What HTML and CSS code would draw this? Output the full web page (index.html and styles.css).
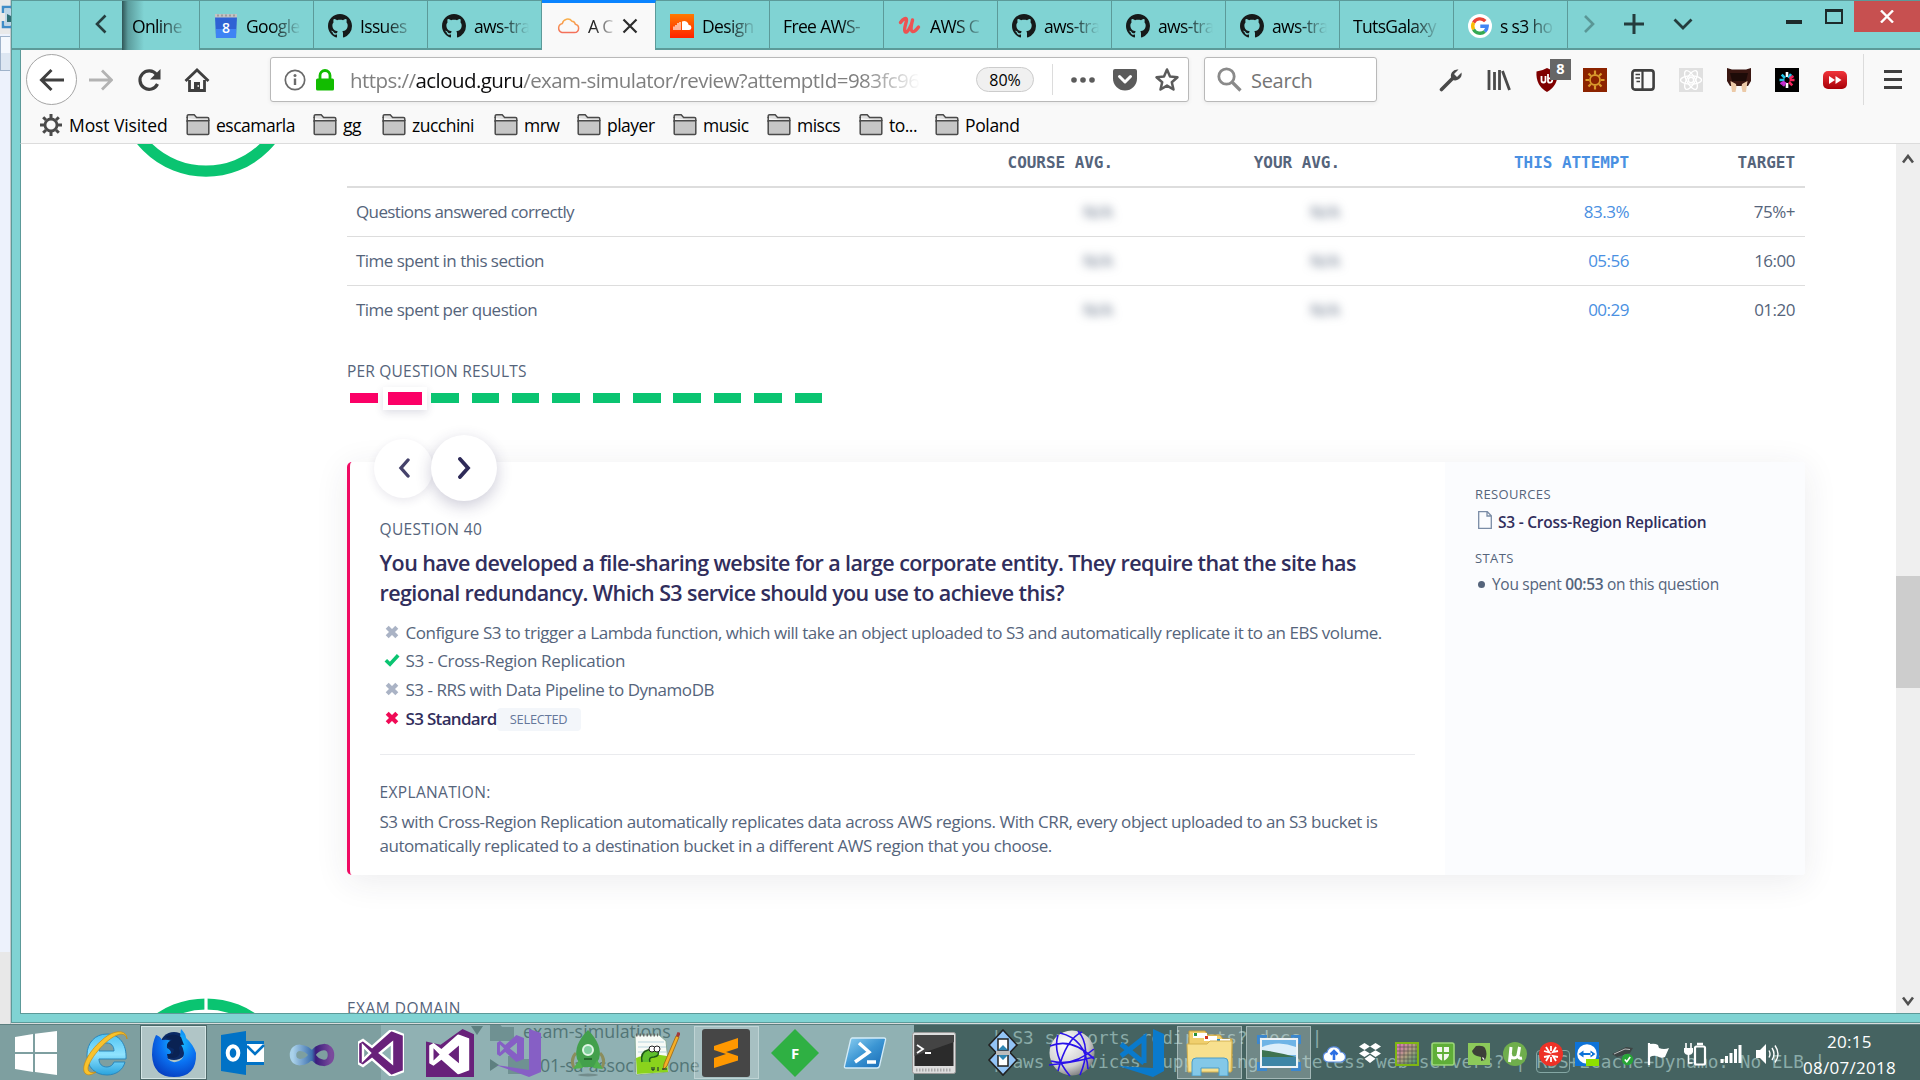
FILE: index.html
```html
<!DOCTYPE html>
<html lang="en">
<head>
<meta charset="utf-8">
<title>A Cloud Guru</title>
<link rel="stylesheet" href="styles.css">
</head>
<body>
<svg class="defs" width="0" height="0">
  <defs>
    <symbol id="github" viewBox="0 0 16 16"><path fill="#161a1a" fill-rule="evenodd" d="M8 0C3.58 0 0 3.58 0 8c0 3.54 2.29 6.53 5.47 7.59.4.07.55-.17.55-.38 0-.19-.01-.82-.01-1.49-2.01.37-2.53-.49-2.69-.94-.09-.23-.48-.94-.82-1.13-.28-.15-.68-.52-.01-.53.63-.01 1.08.58 1.23.82.72 1.21 1.87.87 2.33.66.07-.52.28-.87.51-1.07-1.78-.2-3.64-.89-3.64-3.95 0-.87.31-1.59.82-2.15-.08-.2-.36-1.02.08-2.12 0 0 .67-.21 2.2.82.64-.18 1.32-.27 2-.27s1.36.09 2 .27c1.53-1.04 2.2-.82 2.2-.82.44 1.1.16 1.92.08 2.12.51.56.82 1.27.82 2.15 0 3.07-1.87 3.75-3.65 3.95.29.25.54.73.54 1.48 0 1.07-.01 1.93-.01 2.2 0 .21.15.46.55.38A8.01 8.01 0 0 0 16 8c0-4.42-3.58-8-8-8z"/></symbol>
    <symbol id="folder" viewBox="0 0 24 24"><path d="M1.2 5V3.2q0-1.4 1.4-1.4h5.6l2.4 2.6h10.8q1.4 0 1.4 1.4V8" fill="#dedede" stroke="#4a4a4a" stroke-width="1.5"/><path d="M1.2 7.8h21.6v12.6q0 1-1 1H2.2q-1 0-1-1z" fill="#c6c6c6" stroke="#4a4a4a" stroke-width="1.5"/><path d="M1.2 4v5" stroke="#4a4a4a" stroke-width="1.5"/></symbol>
    <symbol id="cross" viewBox="0 0 14 14"><path d="M2.2 2.2l9.600 9.600M11.800 2.2l-9.600 9.600" stroke="currentColor" stroke-width="4.200"/></symbol>
    <symbol id="vs" viewBox="0 0 46 46"><path fill-rule="evenodd" d="M33 0l13 5v36l-13 5L14 29 5 36 0 33V13l5-3 9 7zM34 13L22 23l12 10zM5 16v14l7-7z"/></symbol>
  </defs>
</svg>

<div class="desktop">
  <div class="behind">
    <svg width="11" height="36" viewBox="0 0 11 36"><path d="M11 7H3v6M3 21v6h8" fill="none" stroke="#3f8cc7" stroke-width="2.5"/><path d="M5 9h6v16H5z" fill="#bcd6e8"/><path d="M7 14l4 2v6H7z" fill="#2c6d74"/></svg>
    <i class="behind-button"></i>
  </div>

  <div class="window">
    <header class="tabs">
      <div class="tab-lead"></div>
      <div class="tab-scroll"><svg width="14" height="20" viewBox="0 0 14 20"><path d="M11.500 1.500L3 10l8.500 8.500" fill="none" stroke="#263f40" stroke-width="2.600"/></svg></div>
      <div class="tab first"><span class="label">Online</span></div>
      <div class="tab"><svg class="fav" viewBox="0 0 24 24"><path d="M1 3h22l-1 21H2z" fill="#2f62d4"/><path d="M2 15h20v9H2z" fill="#3f83f4"/><path d="M1 0h22v3.500H1z" fill="#c4c4c4"/><path d="M4 .5v2M8 .5v2M12 .5v2M16 .5v2M20 .5v2" stroke="#777"/><text x="12" y="18.500" class="cal">8</text></svg><span class="label">Google</span></div>
      <div class="tab"><svg class="fav"><use href="#github"/></svg><span class="label">Issues</span></div>
      <div class="tab"><svg class="fav"><use href="#github"/></svg><span class="label">aws-tra</span></div>
      <div class="tab active"><svg class="fav" viewBox="0 0 24 24"><defs><linearGradient id="cg" x1="0" y1="0" x2="0" y2="1"><stop offset="0" stop-color="#f9b04c"/><stop offset="1" stop-color="#f4705a"/></linearGradient></defs><path d="M6 18.500h12.500a4.200 4.200 0 0 0 .8-8.300 3.600 3.600 0 0 0-3.300-3 5.400 5.400 0 0 0-9.600 2.200A4.700 4.700 0 0 0 6 18.500z" fill="none" stroke="url(#cg)" stroke-width="1.500"/></svg><span class="label short">A C</span><svg class="tab-close" width="16" height="16" viewBox="0 0 16 16"><path d="M1.500 1.500l13 13M14.500 1.500l-13 13" stroke="#2c2c2c" stroke-width="2.200"/></svg></div>
      <div class="tab"><svg class="fav" viewBox="0 0 24 24"><defs><linearGradient id="sc" x1="0" y1="0" x2="0" y2="1"><stop offset="0" stop-color="#ff7a00"/><stop offset="1" stop-color="#ff2200"/></linearGradient></defs><path d="M0 0h24v24H0z" fill="url(#sc)"/><path d="M12 7.500a4.500 4.500 0 0 1 6.700 3.500 2.500 2.500 0 1 1 .3 5h-7z" fill="#fff"/><path d="M4 12.500V16M6 11v5M8 9v7M10 8v8" stroke="#fff" stroke-width="1.200"/></svg><span class="label">Design</span></div>
      <div class="tab bare"><span class="label">Free AWS-</span></div>
      <div class="tab"><svg class="fav" viewBox="0 0 24 24"><path d="M2.500 8.500c2.500-3.500 6-5.500 6-2.500 0 2.500-3 9-1.500 11.500 2 3 6.500-6 7.500-11M14.500 6c-1 4-2.500 10.500 0 11.500 2 .8 4-2 6-4.500" fill="none" stroke="#ec5252" stroke-width="3.400" stroke-linecap="round"/></svg><span class="label">AWS C</span></div>
      <div class="tab"><svg class="fav"><use href="#github"/></svg><span class="label">aws-tra</span></div>
      <div class="tab"><svg class="fav"><use href="#github"/></svg><span class="label">aws-tra</span></div>
      <div class="tab"><svg class="fav"><use href="#github"/></svg><span class="label">aws-tra</span></div>
      <div class="tab bare"><span class="label">TutsGalaxy</span></div>
      <div class="tab"><svg class="fav" viewBox="0 0 24 24"><circle cx="12" cy="12" r="12" fill="#fff"/><g fill="none" stroke-width="3.400"><path d="M17.300 7.200A7.300 7.300 0 0 0 5.600 8.600" stroke="#ea4335"/><path d="M5.600 8.600a7.300 7.300 0 0 0 0 6.900" stroke="#fbbc05"/><path d="M5.600 15.500a7.300 7.300 0 0 0 11.200 2" stroke="#34a853"/><path d="M16.800 17.500A7.300 7.300 0 0 0 19.200 12.300H12.300" stroke="#4285f4"/></g></svg><span class="label">s s3 ho</span></div>
      <div class="tab-tools">
        <svg width="12" height="18" viewBox="0 0 12 18"><path d="M2 1l8 8-8 8" fill="none" stroke="#5a9796" stroke-width="2.600"/></svg>
        <svg width="22" height="22" viewBox="0 0 22 22"><path d="M11 1v20M1 11h20" stroke="#243c3d" stroke-width="3"/></svg>
        <svg width="20" height="12" viewBox="0 0 20 12"><path d="M1.500 1.500L10 10l8.500-8.500" fill="none" stroke="#243c3d" stroke-width="2.800"/></svg>
      </div>
      <div class="window-controls">
        <i class="min"></i><i class="max"></i>
        <div class="close"><svg width="14" height="13" viewBox="0 0 14 13"><path d="M1 .5l12 12M13 .5l-12 12" stroke="#fff" stroke-width="2.400"/></svg></div>
      </div>
    </header>

    <div class="toolbar">
      <div class="back"><svg width="26" height="24" viewBox="0 0 26 24"><path d="M25 12H3M12.500 2L2.500 12l10 10" fill="none" stroke="#3f3f3f" stroke-width="3"/></svg></div>
      <svg class="forward" width="24" height="22" viewBox="0 0 24 22"><path d="M0 11h22M13 1.500L22.500 11 13 20.500" fill="none" stroke="#b3b3b3" stroke-width="2.800"/></svg>
      <svg class="reload" width="24" height="24" viewBox="0 0 24 24"><path d="M19.500 6.500A9.200 9.200 0 1 0 20.500 16" fill="none" stroke="#3f3f3f" stroke-width="3.200"/><path d="M23.500 1v10.500H13z" fill="#3f3f3f"/></svg>
      <svg class="home" width="26" height="24" viewBox="0 0 26 24"><path d="M1.500 13L13 2l11.500 11" fill="none" stroke="#3f3f3f" stroke-width="2.800"/><path d="M5.500 12v10.500h15V12M13 4" fill="none" stroke="#3f3f3f" stroke-width="2.800"/><path d="M10 14h6v8h-6z" fill="#3f3f3f"/><path d="M13.500 18h1.500" stroke="#fff" stroke-width="1.500"/></svg>
      <div class="urlbar">
        <svg width="22" height="22" viewBox="0 0 22 22"><circle cx="11" cy="11" r="9.700" fill="none" stroke="#6a6a6a" stroke-width="1.700"/><path d="M11 9.500V16" stroke="#6a6a6a" stroke-width="2.400"/><circle cx="11" cy="6.400" r="1.500" fill="#6a6a6a"/></svg>
        <svg class="lock" width="18" height="22" viewBox="0 0 18 22"><rect y="9.500" width="18" height="12" rx="1.500" fill="#12bc00"/><path d="M4 11V6.500a5 5 0 0 1 10 0V11" fill="none" stroke="#12bc00" stroke-width="2.800"/></svg>
        <div class="url">https://<b>acloud.guru</b>/exam-simulator/review?attemptId=983fc96</div>
        <div class="zoom">80%</div>
        <i class="rule"></i>
        <svg class="dots" width="24" height="6" viewBox="0 0 24 6"><g fill="#5b5b5b"><circle cx="3" cy="3" r="2.800"/><circle cx="12" cy="3" r="2.800"/><circle cx="21" cy="3" r="2.800"/></g></svg>
        <svg class="pocket" width="24" height="22" viewBox="0 0 24 22"><path d="M2 0h20q2 0 2 2v7.500a12 12 0 0 1-24 0V2q0-2 2-2z" fill="#5b5b5b"/><path d="M6.500 7.500L12 13l5.500-5.500" fill="none" stroke="#fff" stroke-width="3" stroke-linecap="round" stroke-linejoin="round"/></svg>
        <svg width="26" height="25" viewBox="0 0 26 25"><path d="M13 2.500l3 7 7.500.7-5.700 5 1.700 7.300L13 18.600 6.500 22.500l1.700-7.300-5.700-5L10 9.500z" fill="none" stroke="#5b5b5b" stroke-width="2.500" stroke-linejoin="round"/></svg>
      </div>
      <div class="search"><svg width="25" height="25" viewBox="0 0 25 25"><circle cx="9.500" cy="9.500" r="7.700" fill="none" stroke="#8a8a8a" stroke-width="2.800"/><path d="M15 15l8.500 8.500" stroke="#8a8a8a" stroke-width="3.200"/></svg><span>Search</span></div>
      <div class="extensions">
        <div><svg width="24" height="24" viewBox="0 0 24 24"><path d="M2.500 21.500L14 10" stroke="#4a4a4a" stroke-width="3.600" stroke-linecap="round"/><path d="M19.500 1.500L15 6l3 3 4.500-4.500a6.500 6.500 0 0 1-9.500 7A6.500 6.500 0 0 1 19.500 1.500z" fill="#4a4a4a"/></svg></div>
        <div><svg width="24" height="22" viewBox="0 0 24 22"><path d="M2 1v20M7.500 3v18M12.500 1v20M15.500 2l7 19" stroke="#4a4a4a" stroke-width="2.800"/></svg></div>
        <div class="ublock"><svg width="24" height="24" viewBox="0 0 24 24"><path d="M12 0q5 3 10.500 3.500 1 14-10.500 20.500Q.5 17.500 1.500 3.500 7 3 12 0z" fill="#7f0000"/><path d="M6.500 8v4.500q0 2 2 2t2-2V8M13 6v7q0 1.700 2 1.700t2.200-2.200-2.200-2.200H13" fill="none" stroke="#fff" stroke-width="1.800"/></svg><span class="badge">8</span></div>
        <div><svg width="24" height="24" viewBox="0 0 24 24"><path d="M0 0h24v24H0z" fill="#8c2300"/><circle cx="12" cy="12" r="5" fill="none" stroke="#d99a2c" stroke-width="1.800"/><path d="M12 2.500V6M12 18v3.500M2.500 12H6M18 12h3.500M5.500 5.500L8 8M16 16l2.500 2.500M18.500 5.500L16 8M8 16l-2.500 2.500" stroke="#d99a2c" stroke-width="2.200"/></svg></div>
        <div><svg width="24" height="22" viewBox="0 0 24 22"><rect x="1.400" y="1.400" width="21.200" height="19.200" rx="2.600" fill="none" stroke="#3f3f3f" stroke-width="2.600"/><path d="M11.500 1v20" stroke="#3f3f3f" stroke-width="2.200"/><path d="M4.500 5.500h4.500M4.500 9h4.500M5.500 12.500h3.500" stroke="#3f3f3f" stroke-width="1.500"/></svg></div>
        <div><svg width="24" height="24" viewBox="0 0 24 24"><path d="M0 0h24v24H0z" fill="#e0e0e0"/><g fill="none" stroke="#fff" stroke-width="1.300"><circle cx="12" cy="12" r="2.600"/><ellipse cx="12" cy="12" rx="10.500" ry="4.200"/><ellipse cx="12" cy="12" rx="10.500" ry="4.200" transform="rotate(60 12 12)"/><ellipse cx="12" cy="12" rx="10.500" ry="4.200" transform="rotate(120 12 12)"/></g></svg></div>
        <div><svg width="24" height="24" viewBox="0 0 24 24"><path d="M0 0l5 1.500h14L24 0v13l-3 5H3l-3-5z" fill="#3a1712"/><path d="M3 5h18l-2 8H5z" fill="#1d0b08"/><path d="M3.500 13l5.500 3 .5 3-1 5H5zM20.500 13L15 16l-.5 3 1 5H19z" fill="#eccaa8"/></svg></div>
        <div><svg width="24" height="24" viewBox="0 0 24 24"><path d="M0 0h24v24H0z"/><g stroke-width="2.600"><path d="M12 4v5M12 15v5" stroke="#fff"/><path d="M4.500 12h5M6.700 6.700L10 10M16 6l-2.500 4" stroke="#22c5e8"/><path d="M14.500 12h5M17.300 17.300L14 14M18.500 8l-4 2.500" stroke="#f1265c"/><path d="M8 18l2.500-4M5.500 16l4-2.500" stroke="#c52fd0"/></g></svg></div>
        <div><svg width="24" height="18" viewBox="0 0 24 18"><defs><linearGradient id="rd" x1="0" y1="0" x2="0" y2="1"><stop offset="0" stop-color="#f1343a"/><stop offset="1" stop-color="#a80008"/></linearGradient></defs><rect width="24" height="18" rx="5" fill="url(#rd)"/><path d="M6 5l6 4-6 4zM12.500 5l6 4-6 4z" fill="#fff"/></svg></div>
      </div>
      <i class="rule tall"></i>
      <svg class="menu" width="18" height="19" viewBox="0 0 18 19"><path d="M0 1.500h18M0 9.500h18M0 17.500h18" stroke="#3f3f3f" stroke-width="2.800"/></svg>
    </div>

    <nav class="bookmarks">
      <a class="bm-gear"><svg width="22" height="22" viewBox="0 0 22 22"><circle cx="11" cy="11" r="6" fill="none" stroke="#4a4a4a" stroke-width="2.800"/><path d="M11 0v4M11 18v4M0 11h4M18 11h4M3.200 3.200L6 6M16 16l2.800 2.800M18.800 3.200L16 6M6 16l-2.800 2.800" stroke="#4a4a4a" stroke-width="3"/></svg><span>Most Visited</span></a>
      <a><svg class="fold"><use href="#folder"/></svg><span>escamarla</span></a>
      <a><svg class="fold"><use href="#folder"/></svg><span>gg</span></a>
      <a><svg class="fold"><use href="#folder"/></svg><span>zucchini</span></a>
      <a><svg class="fold"><use href="#folder"/></svg><span>mrw</span></a>
      <a><svg class="fold"><use href="#folder"/></svg><span>player</span></a>
      <a><svg class="fold"><use href="#folder"/></svg><span>music</span></a>
      <a><svg class="fold"><use href="#folder"/></svg><span>miscs</span></a>
      <a><svg class="fold"><use href="#folder"/></svg><span>to...</span></a>
      <a><svg class="fold"><use href="#folder"/></svg><span>Poland</span></a>
    </nav>

    <div class="viewport">
      <div class="page">
        <section class="domain">
          <svg class="ring" width="178" height="33" viewBox="0 145 178 33"><circle cx="89" cy="89" r="83.200" fill="none" stroke="#0ac471" stroke-width="11.200"/></svg>
          <div class="results">
            <table>
              <thead><tr><th class="name"></th><th class="c1">COURSE AVG.</th><th class="c2">YOUR AVG.</th><th class="c3 blue">THIS ATTEMPT</th><th>TARGET</th></tr></thead>
              <tbody>
                <tr><td class="name">Questions answered correctly</td><td class="c1"><span class="blurred">N/A</span></td><td class="c2"><span class="blurred">N/A</span></td><td class="c3 blue">83.3%</td><td>75%+</td></tr>
                <tr><td class="name loose">Time spent in this section</td><td class="c1"><span class="blurred">N/A</span></td><td class="c2"><span class="blurred">N/A</span></td><td class="c3 blue">05:56</td><td>16:00</td></tr>
                <tr><td class="name loose">Time spent per question</td><td class="c1"><span class="blurred">N/A</span></td><td class="c2"><span class="blurred">N/A</span></td><td class="c3 blue">00:29</td><td>01:20</td></tr>
              </tbody>
            </table>
            <h3 class="per">PER QUESTION RESULTS</h3>
            <div class="bars"><i class="wrong"></i><i class="wrong current"></i><i></i><i></i><i></i><i></i><i></i><i></i><i></i><i></i><i></i><i></i></div>

            <article class="card">
              <div class="pager">
                <button class="prev"><svg width="12" height="20" viewBox="0 0 12 20"><path d="M10 2L3 10l7 8" fill="none" stroke="#45426b" stroke-width="3.400" stroke-linecap="round"/></svg></button>
                <button class="next"><svg width="13" height="22" viewBox="0 0 13 22"><path d="M2 2l8 9-8 9" fill="none" stroke="#2e2a58" stroke-width="3.800" stroke-linecap="round"/></svg></button>
              </div>
              <div class="question">
                <h4>QUESTION 40</h4>
                <h2>You have developed a file-sharing website for a large corporate entity. They require that the site has<br>regional redundancy. Which S3 service should you use to achieve this?</h2>
                <ul class="options">
                  <li><svg class="mark"><use href="#cross"/></svg><span>Configure S3 to trigger a Lambda function, which will take an object uploaded to S3 and automatically replicate it to an EBS volume.</span></li>
                  <li class="right"><svg class="mark tick" viewBox="0 0 16 14"><path d="M1.800 7.200L6 11.200l8.200-9" fill="none" stroke="currentColor" stroke-width="3.600"/></svg><span>S3 - Cross-Region Replication</span></li>
                  <li><svg class="mark"><use href="#cross"/></svg><span>S3 - RRS with Data Pipeline to DynamoDB</span></li>
                  <li class="chosen"><svg class="mark"><use href="#cross"/></svg><span>S3 Standard</span><em>SELECTED</em></li>
                </ul>
                <hr>
                <h4>EXPLANATION:</h4>
                <p>S3 with Cross-Region Replication automatically replicates data across AWS regions. With CRR, every object uploaded to an S3 bucket is<br>automatically replicated to a destination bucket in a different AWS region that you choose.</p>
              </div>
              <aside>
                <h5>RESOURCES</h5>
                <a class="resource"><svg width="14" height="18" viewBox="0 0 14 18"><path d="M.7.700h8.600l4 4v12.600H.7zM9 .7v4.300h4.300" fill="none" stroke="#7a8ca6" stroke-width="1.300"/></svg><span>S3 - Cross-Region Replication</span></a>
                <h5>STATS</h5>
                <div class="stat"><i></i><span>You spent <b>00:53</b> on this question</span></div>
              </aside>
            </article>
          </div>
        </section>
        <section class="domain next-domain">
          <svg class="ring" width="178" height="16" viewBox="0 0 178 16"><circle cx="89" cy="89" r="83" fill="none" stroke="#0ac471" stroke-width="11.200"/><path d="M89 0v13" stroke="#fff" stroke-width="3.200"/></svg>
          <h3>EXAM DOMAIN</h3>
        </section>
      </div>
      <div class="scrollbar">
        <svg width="12" height="10" viewBox="0 0 12 10"><path d="M1 8.500L6 2l5 6.500" fill="none" stroke="#505050" stroke-width="2.600"/></svg>
        <i class="thumb"></i>
        <svg width="12" height="10" viewBox="0 0 12 10"><path d="M1 1.500L6 8l5-6.500" fill="none" stroke="#505050" stroke-width="2.600"/></svg>
      </div>
    </div>
  </div>
</div>

<footer class="taskbar">
  <div class="ghost ghost-tree">
    <div><svg width="12" height="9" viewBox="0 0 12 9"><path d="M0 0h12L6 9z" fill="#5e8080"/></svg><svg width="26" height="20" viewBox="0 0 26 20"><path d="M0 2h9l3 4h12v14H0z" fill="#6f9192"/></svg><span>exam-simulations</span></div>
    <div class="nested"><svg width="9" height="12" viewBox="0 0 9 12"><path d="M0 0l9 6-9 6z" fill="#5e8080"/></svg><svg width="23" height="18" viewBox="0 0 23 18"><path d="M0 0h9l3 3h11v15H0z" fill="#6f9192"/></svg><span>01-sa-associate-one</span></div>
  </div>
  <pre class="ghost ghost-editor">| S3 supports redirects? docs |
| aws services supporting stateless web servers? | <span>RDS</span>+ECache+Dynamo: No ELB |</pre>

  <div class="apps">
    <div><svg width="44" height="44" viewBox="0 0 44 44"><path d="M1 6l18-3v18H1zM21 2.700L43 0v21H21zM1 23h18v18L1 38zM21 23h22v21l-22-3z" fill="#fff"/></svg></div>
    <div><svg width="48" height="48" viewBox="0 0 48 48"><defs><linearGradient id="ie" x1="0" y1="0" x2="0" y2="1"><stop offset="0" stop-color="#4fc3f2"/><stop offset=".5" stop-color="#8fe3ff"/><stop offset="1" stop-color="#2aa3dd"/></linearGradient></defs><path d="M26 5C14 5 6 14 6 26s8 20 20 20c9 0 16-5 18-13H33c-1 3-4 5-7 5-5 0-8-3-8-8h27C46 15 38 5 26 5zm-8 17c1-5 4-8 8-8s7 3 7 8z" fill="url(#ie)" stroke="#2b87bb"/><path d="M46 10C46 0 32 0 20 12 8 22-2 40 5 45c3 2 7 0 10-2-4 1-8 1-8-4C8 30 28 6 40 5c4 0 5 2 6 5z" fill="#f9c22c" stroke="#c88a0c" stroke-width=".7"/></svg></div>
    <div class="on"><svg width="46" height="48" viewBox="0 0 46 48"><defs><radialGradient id="fx" cx=".6" cy=".3" r=".8"><stop offset="0" stop-color="#1ac8ff"/><stop offset=".5" stop-color="#0a72f2"/><stop offset="1" stop-color="#0536b8"/></radialGradient></defs><circle cx="23" cy="17" r="14" fill="#0b2a66"/><path d="M5 6q4 1 6 5 5-1 9 1-5 3-4 7 4 2 4 5-5 2-3 6 4 5 11 2 5-3 5-8-1-6-4-10 0-9 1-14 5 5 5 9 7 6 10 15 1 24-22 24Q2 48 1 26 1 14 5 6z" fill="url(#fx)"/><path d="M14 8q8-5 16 0l3 8q-4-1-5 3 3 9-6 10-6 0-6-4h6l1-5-7-3q0-5 6-6z" fill="#0a2253"/></svg></div>
    <div><svg width="44" height="44" viewBox="0 0 44 44"><path d="M22 10h21v24H22z" fill="#0072c6"/><path d="M26 13h17v18H26z" fill="#fff"/><path d="M26 15l8 8 9-9" fill="none" stroke="#0072c6" stroke-width="2.500"/><path d="M0 4l25-4v44L0 40z" fill="#0072c6"/><ellipse cx="12" cy="22" rx="5.300" ry="6.700" fill="none" stroke="#fff" stroke-width="4"/></svg></div>
    <div><svg class="drop" width="46" height="26" viewBox="0 0 46 26"><defs><linearGradient id="inf"><stop offset="0" stop-color="#a9d1ea"/><stop offset=".5" stop-color="#3c6fae"/><stop offset=".6" stop-color="#3b1d7c"/><stop offset="1" stop-color="#7a4a9c"/></linearGradient></defs><path d="M23 13C17 4 4 3 4 13s13 9 19 0c6-10 19-11 19 0s-13 10-19 0z" fill="none" stroke="url(#inf)" stroke-width="6.500"/></svg></div>
    <div><svg width="50" height="50" viewBox="-2 -2 50 50" fill="#68217a" stroke="#fff" stroke-width="2.400"><use href="#vs" width="46" height="46"/></svg></div>
    <div><svg width="48" height="48" viewBox="0 0 46 46"><path d="M0 12l14 3L35 0l11 5v41H0z" fill="#68217a"/><g transform="translate(3 5) scale(.84)" fill="#fff"><use href="#vs" width="46" height="46"/></g></svg></div>
    <div><svg width="46" height="48" viewBox="0 0 46 48"><path d="M33 0l12 4v39l-12 5L0 36l33 5z" fill="#865fc5"/><g transform="translate(1 6)" fill="#865fc5"><use href="#vs" width="27" height="27"/></g></svg></div>
    <div><svg width="36" height="48" viewBox="0 0 36 48"><path d="M6 24q-6 6-2 15M30 24q6 6 2 15" fill="none" stroke="#8b8d5c" stroke-width="3"/><path d="M18 1Q3 16 7 30l5 8h12l5-8Q33 16 18 1z" fill="#43a04c"/><path d="M3 40l6-9 4 8zM33 40l-6-9-4 8z" fill="#4fb04e"/><circle cx="18" cy="21" r="5" fill="#7fcf9c" stroke="#dff5e4" stroke-width="2"/><path d="M14 30h8" stroke="#256b2e" stroke-width="2"/><ellipse cx="18" cy="46" rx="10" ry="1.500" fill="#728c8c"/></svg></div>
    <div><svg width="46" height="46" viewBox="0 0 46 46"><path d="M1 5h24l7 6 3 31-33 3z" fill="#f8fbf6" stroke="#8a9"/><path d="M4 12h26M4 17h28M4 22h28" stroke="#b5d3dd"/><path d="M2 28q14-6 31-2l1 16-31 2z" fill="#8ad31c"/><path d="M2 5h22" stroke="#666" stroke-width="3" stroke-dasharray="1.500 2"/><path d="M8 32q-2-10 6-12 6-4 10 1 2 5-4 6-6 0-4 5" fill="#5fc02c" stroke="#1f5a17" stroke-width="1.500"/><circle cx="18" cy="19" r="3" fill="#fff" stroke="#222"/><circle cx="23" cy="19" r="3" fill="#fff" stroke="#222"/><path d="M30 34L42 6l3 1-12 29-4 4z" fill="#f5ae27" stroke="#9a6410" stroke-width=".8"/><path d="M42 6l1.500-4 3 1-1.500 4z" fill="#a33a3a"/><path d="M18 37v3h2v-3M24 37v4M28 39h5" stroke="#123" fill="none"/></svg></div>
    <div class="on dim"><svg width="48" height="48" viewBox="0 0 48 48"><rect width="48" height="48" rx="3" fill="#464646"/><path d="M12 17l24-8v10l-12 4 12 4v4.500L12 39V29l12-4-12-4z" fill="#ff9800"/></svg></div>
    <div><svg width="48" height="48" viewBox="0 0 48 48"><path d="M24 0l24 24-24 24L0 24z" fill="#2fb043"/><text x="24" y="29.500" class="f-logo">F</text></svg></div>
    <div><svg width="46" height="34" viewBox="0 0 46 34"><defs><linearGradient id="ps" x1="0" y1="0" x2="1" y2="1"><stop offset="0" stop-color="#8dd0f2"/><stop offset=".5" stop-color="#3b95d3"/><stop offset="1" stop-color="#1668b4"/></linearGradient></defs><path d="M11 2h32q2 0 1.500 2l-6 26q-.5 2-2.500 2H5q-2 0-1.500-2l6-26Q10 2 11 2z" fill="url(#ps)" stroke="#d3ecf8" stroke-width="1.300"/><path d="M18 7l10 9-14 10M26 26h9" fill="none" stroke="#fff" stroke-width="3.400"/></svg></div>
    <div><svg width="44" height="42" viewBox="0 0 44 42"><rect x=".5" y=".5" width="43" height="41" rx="2" fill="#ddd" stroke="#999"/><path d="M2.500 3h39v31h-39z" fill="#2b2b2b"/><path d="M2.500 24L42 10V3H2.500z" fill="#444"/><path d="M5 13l6 4-6 4M13 21h6" fill="none" stroke="#fff" stroke-width="1.800"/><path d="M4 38h36" stroke="#aaa" stroke-width="3" stroke-dasharray="1.500 1.500"/></svg></div>
    <div><svg width="32" height="48" viewBox="0 0 32 48"><path d="M16 1l14 15-7 7.500L30 31 16 46 2 31l7-7.500L2 16z" fill="#93c4f6" stroke="#222" stroke-width="1.600"/><path d="M11 10h10v11H11zM11 26h10v11H11z" fill="#fff" stroke="#222" stroke-width="1.500"/><path d="M9 22h14v4H9z" fill="#bcbcbc"/><path d="M16 16l5 5H11zM16 31l-5-5h10z" fill="#2f86b4"/></svg></div>
    <div><svg width="48" height="48" viewBox="0 0 48 48"><defs><radialGradient id="sp" cx=".35" cy=".3" r=".85"><stop offset="0" stop-color="#fff"/><stop offset=".6" stop-color="#cfcfcf"/><stop offset="1" stop-color="#5a5a5a"/></radialGradient></defs><circle cx="24" cy="24" r="22.500" fill="url(#sp)"/><g fill="none" stroke="#2a12ea" stroke-width="1.600"><path d="M2 17Q24 8 46 30M3 32q22 6 43-12M10 6q-6 20 12 41M12 4q26 6 28 36M34 3Q18 10 10 42M30 2q14 16 2 44M1 36q22-2 45-8"/></g></svg></div>
    <div><svg width="46" height="48" viewBox="0 0 46 48"><path d="M35 0l11 5v37l-11 6L0 37l35 2z" fill="#0a7acc"/><path d="M3 15l23 19M3 27L26 9v25" fill="none" stroke="#0a7acc" stroke-width="5"/></svg></div>
    <div class="on dim"><svg width="48" height="46" viewBox="0 0 48 46"><path d="M3 1h16l3 4h12l3 4h9v32H3z" fill="#f0cf6d" stroke="#c29b36"/><path d="M7 3h14v5H7zM18 6h13v5H18zM30 9h14v5H30z" fill="#fff"/><path d="M8 3h3v3H8z" fill="#29913b"/><path d="M19 6h3v3h-3z" fill="#d1361f"/><path d="M31 9h3v3h-3z" fill="#2387c9"/><path d="M1 14h20l3-3h22l-1 31H2z" fill="#f7e08e" stroke="#d5b251"/><path d="M6 46V32q0-4 4-4h28q4 0 4 4v14h-9v-8H15v8z" fill="#83c8e8" stroke="#4a9cc6"/></svg></div>
    <div class="on dim"><svg width="44" height="36" viewBox="0 0 44 36"><path d="M1 9V1h9M34 1h9v8M43 27v8h-9M10 35H1v-8" fill="none" stroke="#3b87cf" stroke-width="3.500"/><path d="M3 3h38v30H3z" fill="#eef3f6"/><path d="M5 5h34v26H5z" fill="#6fb4e6"/><path d="M5 12q17-7 34 0v8H5z" fill="#dceefa"/><path d="M5 15q15 2 34 7H5z" fill="#3f7350"/><path d="M5 22h34v9H5z" fill="#3f86a6"/></svg></div>
  </div>

  <div class="tray">
    <div><svg width="24" height="18" viewBox="0 0 24 18"><path d="M6 17a5 5 0 0 1-1-9.800A7 7 0 0 1 18.500 7 5 5 0 0 1 18.500 17z" fill="#fff" stroke="#5b8be0" stroke-width="1.200"/><path d="M12 15V7M8.500 9.500L12 6l3.500 3.500" fill="none" stroke="#2c6fe3" stroke-width="2.600"/></svg></div>
    <div><svg width="24" height="21" viewBox="0 0 24 21"><path d="M6.500 0L12 3.600 6.500 7 1 3.600zM17.500 0L23 3.600 17.500 7 12 3.600zM6.500 7.200L12 10.600 6.500 14 1 10.600zM17.500 7.200L23 10.600 17.500 14 12 10.600zM12 12l5.500 3.800L12 20l-5.500-4.200z" fill="#fff"/></svg></div>
    <div><svg width="24" height="24" viewBox="0 0 24 24"><defs><linearGradient id="mx" x1="0" y1="0" x2="1" y2="1"><stop offset="0" stop-color="#e86fc4"/><stop offset=".5" stop-color="#b0a080"/><stop offset="1" stop-color="#3a9a70"/></linearGradient></defs><rect x="1" y="1" width="22" height="22" fill="url(#mx)" stroke="#7fb614" stroke-width="2"/><path d="M5 2v20M9 2v20M13 2v20M17 2v20M21 2v20M2 5h20M2 9h20M2 13h20M2 17h20M2 21h20" stroke="#4b4b48" stroke-opacity=".6"/></svg></div>
    <div><svg width="24" height="24" viewBox="0 0 24 24"><rect x="1" y="1" width="22" height="22" rx="2" fill="#5fae38" stroke="#9bd678" stroke-width="1.600"/><path d="M6 5h12v8q-1 4-6 6-5-2-6-6z" fill="#f2f7ee"/><path d="M12 5v14M6 11h12" stroke="#5fae38" stroke-width="1.800"/></svg></div>
    <div><svg width="22" height="22" viewBox="0 0 22 22"><path d="M0 0h22v22H0z" fill="#8cc95a"/><path d="M4 8l4-5q7-1 9 2 3 6 0 12l-4 1v-4l-4-1q-4-1-5-5z" fill="#3c4038"/><path d="M14 15q2-1 2 2" fill="none" stroke="#fff"/></svg></div>
    <div><svg width="24" height="24" viewBox="0 0 24 24"><circle cx="12" cy="12" r="12" fill="#6fae4c"/><path d="M8 5L6.500 20M7.500 12q0 4 3.500 4t4.500-4L16.500 5 15 13q0 4 4 3" fill="none" stroke="#fff" stroke-width="3"/></svg></div>
    <div><svg width="24" height="24" viewBox="0 0 24 24"><circle cx="12" cy="12" r="12" fill="#ee3227"/><path d="M7 5l3.500 5.500L5 9M17 5l-3 5 5-1M7 19l3-5-5 1M17 19l-3-5 5 1M12 4v5M12 15v5" fill="none" stroke="#fff" stroke-width="1.800"/></svg></div>
    <div><svg width="24" height="24" viewBox="0 0 24 24"><path d="M0 0h24v24H0z" fill="#0e73d8"/><circle cx="12" cy="12" r="9.800" fill="#fff"/><path d="M3.500 12l5-3.500v7zM20.500 12l-5-3.500v7zM7 11h10v2H7z" fill="#0e73d8"/><path d="M11 17h13v7H11z" fill="#8ee000"/></svg></div>
    <div><svg width="24" height="24" viewBox="0 0 24 24"><path d="M1 12L15 5l7 1-3 5-13 4z" fill="#3d4444"/><path d="M3 12l11-5 5 .5" stroke="#b9bebe" fill="none"/><circle cx="16.500" cy="17.500" r="5.800" fill="#28a637"/><path d="M13.800 17.500l2 2.300 3.400-4.800" fill="none" stroke="#fff" stroke-width="1.600"/></svg></div>
    <div><svg width="24" height="24" viewBox="0 0 24 24"><path d="M2 1v22" stroke="#fff" stroke-width="2.200"/><path d="M3 2q5-1 8 1l1 3q5 2 10 0l-4 9q-4 2-8-1-4-1-7 1z" fill="#fff"/></svg></div>
    <div><svg width="24" height="24" viewBox="0 0 24 24"><rect x="12" y="4.500" width="10" height="18" rx="1.500" fill="#43605e" stroke="#fff" stroke-width="2.200"/><path d="M14 2h6" stroke="#fff" stroke-width="2.500"/><path d="M3 1v5M8 1v5" stroke="#fff" stroke-width="1.600"/><path d="M1 6h9v4q-1 3-4.500 3T1 10z" fill="#fff"/><path d="M5.500 12v9h4" fill="none" stroke="#fff" stroke-width="1.600"/></svg></div>
    <div><svg width="22" height="18" viewBox="0 0 22 18"><path d="M2 18v-4M6.500 18v-7M11 18v-10M15.500 18V4M20 18V0" stroke="#fff" stroke-width="3"/></svg></div>
    <div><svg width="24" height="22" viewBox="0 0 24 22"><path d="M1 7h4l6-6v20l-6-6H1z" fill="#fff"/><path d="M14 7.500q2 3.500 0 7M17 5q4 6 0 12M20 2.500q6 8.500 0 17" fill="none" stroke="#fff" stroke-width="1.400"/></svg></div>
  </div>

  <div class="clock"><span>20:15</span><span>08/07/2018</span></div>
</footer>
</body>
</html>
```
FILE: styles.css
```css
* { box-sizing: border-box; margin: 0; padding: 0; }

body {
  width: 1920px;
  height: 1080px;
  overflow: hidden;
  display: flex;
  flex-direction: column;
  font-family: "Open Sans", "Noto Sans", sans-serif;
  font-size: 17px;
  color: #000;
  background: #fff;
  white-space: nowrap;
}

i, em { font-style: normal; }
svg { display: block; flex: none; }
.defs { position: absolute; }

/* ---------- desktop and window frame ---------- */
.desktop { display: flex; height: 1024px; background: #d9dcdc; }

.behind {
  width: 11px;
  background: linear-gradient(#e9e9e9 0 34px, #edf2fc 34px 952px, #e8e8e8 952px);
  border-right: 1px solid #c3c8cc;
}
.behind-button {
  display: block;
  height: 35px;
  border: 1px solid #9fb3ca;
  border-right: 0;
  background: linear-gradient(#f4f8fd 50%, #dde7f2 50%);
}

.window {
  flex: 1;
  display: flex;
  flex-direction: column;
  height: 1023px;
  background: #80d3d3;
  border-left: 1px solid #5c9a99;
  border-top: 1px solid #5c9a99;
  border-bottom: 1px solid #5c9a99;
}

/* ---------- tab strip ---------- */
.tabs { display: flex; height: 49px; background: #80d3d3; box-shadow: inset 0 -2px #5c9a99; }
.tab-lead { width: 68px; border-right: 1px solid #5c9a99; }
.tab-scroll { width: 42px; padding: 13px 0 0 14px; }
.tab {
  width: 114px;
  display: flex;
  align-items: flex-start;
  padding: 13px 0 0 14px;
  border-right: 1px solid #5c9a99;
}
.tab.first {
  width: 78px;
  padding-left: 10px;
  background: linear-gradient(90deg, #2f5556 0, #5b9c9c 6px, #80d3d3 22px);
}
.fav { width: 24px; height: 24px; margin-right: 8px; }
.label {
  width: 55px;
  overflow: hidden;
  line-height: 24px;
  font-size: 17.500px;
  letter-spacing: -.65px;
  -webkit-mask-image: linear-gradient(90deg, #000 45%, transparent);
  mask-image: linear-gradient(90deg, #000 45%, transparent);
}
.bare { padding-left: 13px; }
.bare .label { width: 87px; -webkit-mask-image: linear-gradient(90deg, #000 65%, transparent); mask-image: linear-gradient(90deg, #000 65%, transparent); }
.label.short { width: 30px; color: #222; -webkit-mask-image: linear-gradient(90deg, #000 20%, transparent); mask-image: linear-gradient(90deg, #000 20%, transparent); }
.tab.active {
  background: #f9f9f9;
  border-top: 3px solid #0a84ff;
  margin-top: -1px;
  height: 50px;
  padding-top: 11px;
}
.tab-close { margin: 4px 0 0 4px; }
.cal { font: 600 14px "Open Sans", sans-serif; fill: #fff; text-anchor: middle; }

.tab-tools { display: flex; align-items: center; gap: 28px; padding: 0 0 3px 15px; }
.window-controls { display: flex; margin-left: auto; }
.min { width: 16px; height: 4px; margin: 19px 23px 0 0; background: #1d2b2b; }
.max { width: 18px; height: 15px; margin: 8px 11px 0 0; border: 2px solid #1d2b2b; border-top-width: 3px; }
.close { width: 66px; height: 31px; display: flex; align-items: center; justify-content: center; background: #c75050; }

/* ---------- navigation toolbar ---------- */
.toolbar { display: flex; align-items: center; height: 59px; margin-left: 8px; background: #f9f9f9; border-left: 1px solid #5c9a99; }
.back {
  width: 51px; height: 51px; margin-left: 5px;
  display: flex; align-items: center; justify-content: center;
  border: 1px solid #a5a5a5; border-radius: 50%; background: #fff;
}
.forward { margin-left: 12px; }
.reload { margin-left: 24px; }
.home { margin-left: 23px; }
.urlbar {
  display: flex; align-items: center;
  width: 919px; height: 45px; margin-left: 60px; padding-left: 13px;
  background: #fff; border: 1px solid #b9b9b9; border-radius: 3px; box-shadow: 0 1px 4px rgba(0, 0, 0, .07);
}
.lock { margin-left: 10px; }
.url {
  width: 576px; margin-left: 16px; overflow: hidden;
  font-size: 20.500px; line-height: 30px; letter-spacing: -.56px; color: #7f7f7f;
  -webkit-mask-image: linear-gradient(90deg, #000 89%, transparent 99%);
  mask-image: linear-gradient(90deg, #000 89%, transparent 99%);
}
.url b { font-weight: 400; color: #0c0c0d; }
.zoom {
  width: 58px; height: 25px; margin-left: 50px;
  font-size: 16px; line-height: 24px; text-align: center;
  background: #f0f0f0; border: 1px solid #ccc; border-radius: 13px;
}
.rule { width: 1px; height: 31px; margin-left: 18px; background: #dcdcdc; }
.rule.tall { height: 51px; margin-left: 4px; }
.dots { margin-left: 18px; }
.pocket { margin: 0 17px 0 18px; }
.search {
  display: flex; align-items: center;
  width: 173px; height: 45px; margin-left: 15px; padding-left: 12px;
  background: #fff; border: 1px solid #b9b9b9; border-radius: 3px; box-shadow: 0 1px 4px rgba(0, 0, 0, .07);
}
.search span { margin: 1px 0 0 9px; font-size: 20px; letter-spacing: -.3px; color: #757575; }
.extensions { display: flex; margin-left: 50px; }
.extensions div { width: 48px; height: 24px; display: flex; align-items: center; justify-content: center; }
.ublock { position: relative; }
.badge {
  position: absolute; left: 27px; top: -9px; width: 21px; height: 21px;
  font-size: 14.500px; font-weight: 700; line-height: 20px; text-align: center; color: #fff; background: #666;
}
.menu { margin-left: 20px; }

/* ---------- bookmarks ---------- */
.bookmarks {
  display: flex; height: 35px; margin-left: 8px; padding: 3px 0 0 19px;
  background: #f9f9f9; border-left: 1px solid #5c9a99; border-bottom: 1px solid #dcdcdc;
}
.bookmarks a { display: flex; align-items: center; gap: 6px; height: 26px; font-size: 17.500px; letter-spacing: -.5px; }
.bookmarks .bm-gear { gap: 7px; letter-spacing: -.1px; }
.fold { width: 24px; height: 24px; }
.bookmarks a:nth-child(1) { width: 146px; }
.bookmarks a:nth-child(2) { width: 127px; }
.bookmarks a:nth-child(3) { width: 69px; }
.bookmarks a:nth-child(4) { width: 112px; }
.bookmarks a:nth-child(5) { width: 83px; }
.bookmarks a:nth-child(6) { width: 96px; }
.bookmarks a:nth-child(7) { width: 94px; }
.bookmarks a:nth-child(8) { width: 92px; }
.bookmarks a:nth-child(9) { width: 76px; }
.bookmarks a:nth-child(10) { letter-spacing: -.35px; }

/* ---------- page ---------- */
.viewport {
  display: flex; height: 870px; margin-left: 8px; overflow: hidden;
  background: #fff; border-left: 1px solid #5c9a99; border-bottom: 1px solid #5c9a99;
}
.page { flex: 1; color: #55647b; }
.domain { display: grid; grid-template-columns: 326px 1458px; align-items: start; }
.ring { margin-left: 96px; }

table { width: 1458px; table-layout: fixed; border-collapse: collapse; letter-spacing: -.5px; }
th {
  height: 43px; padding: 0 10px 5px 0;
  font: 700 16px "DejaVu Sans Mono", monospace; letter-spacing: -.05px; text-align: right;
  border-bottom: 2px solid #ddd;
}
td { height: 49px; padding-right: 10px; text-align: right; border-bottom: 1px solid #ddd; }
tr:last-child td { border-bottom: 0; }
th.name { width: 549px; }
td.name { padding-left: 9px; text-align: left; letter-spacing: -.63px; }
td.loose { letter-spacing: -.52px; }
th.c1 { width: 227px; }
th.c2 { width: 227px; }
th.c3 { width: 289px; }
.blue { color: #4a90e2; }
.blurred { filter: blur(5px); letter-spacing: 0; }

h3 { font-size: 15.500px; font-weight: 400; line-height: 20px; letter-spacing: .18px; }
.per { margin-top: 27px; letter-spacing: .2px; }

.bars { display: flex; align-items: center; height: 12px; margin: 11px 0 0 -3px; }
.bars i { width: 27.600px; height: 10px; margin: 0 6.400px; background: #0ac471; }
.bars .wrong { background: #fb0066; }
.bars .current { width: 34px; height: 13px; margin: 0 3.200px; outline: 5px solid #fff; box-shadow: 0 3px 8px 5px rgba(40, 40, 90, .15); }

.card {
  position: relative;
  display: flex; width: 1458px; height: 413px; margin-top: 58px;
  background: #fff; border-left: 3px solid #f00a63; border-radius: 5px 3px 3px 5px;
  box-shadow: 0 6px 34px rgba(40, 45, 70, .09);
}
.pager { position: absolute; left: 24px; top: -27px; display: flex; align-items: center; }
.pager button { display: flex; align-items: center; justify-content: center; border: 0; border-radius: 50%; background: #fff; }
.prev { width: 59px; height: 59px; box-shadow: 0 3px 10px rgba(45, 40, 90, .1); }
.next { width: 66px; height: 66px; margin-left: -2px; box-shadow: 0 5px 16px rgba(45, 40, 90, .24); }

.question { width: 1095px; padding: 57px 0 0 29.500px; }
h4 { font-size: 15.500px; font-weight: 400; line-height: 20px; letter-spacing: .35px; }
h2 { margin-top: 9px; font-size: 21.500px; font-weight: 600; line-height: 30px; letter-spacing: -.6px; color: #312e5c; }
h2::after { content: ""; }
.options { margin-top: 10px; list-style: none; }
.options li { display: flex; align-items: center; height: 28.600px; letter-spacing: -.455px; }
.options .right span { letter-spacing: -.33px; }
.mark { width: 14px; height: 14px; margin: -1px 7px 0 5px; color: #aab3c5; }
.options .tick { width: 16px; height: 14px; margin: -2px 6px 0 4px; color: #0ac471; }
.chosen .mark { color: #f00a56; }
.chosen span { font-weight: 600; letter-spacing: -.68px; color: #312e5c; }
.chosen em {
  width: 84px; height: 23px; margin-top: 2px;
  font-size: 12.800px; line-height: 23px; letter-spacing: -.22px; text-align: center; color: #64779a;
  background: #f3f6fa; border-radius: 4px;
}
hr { width: 1035px; margin: 22px 0 27px; border: 0; border-top: 1px solid #eaebee; }
.question p { margin-top: 8px; line-height: 24px; letter-spacing: -.447px; }

aside { flex: 1; padding: 22px 0 0 30px; background: #fbfcfe; border-radius: 0 3px 3px 0; }
h5 { font-size: 13px; font-weight: 400; line-height: 20px; letter-spacing: .38px; }
.resource { display: flex; align-items: center; gap: 6px; height: 26px; margin: 5px 0 13px 3px; font-size: 15.500px; font-weight: 600; letter-spacing: -.23px; color: #312e5c; }
.resource svg { margin-top: -5px; }
.stat { display: flex; align-items: center; gap: 7px; height: 26px; margin: 3px 0 0 3px; font-size: 15.500px; letter-spacing: -.3px; }
.stat i { width: 7px; height: 7px; border-radius: 50%; background: #55647b; }
.stat b { font-weight: 600; }

.next-domain { margin-top: 123px; }
.next-domain h3 { letter-spacing: .5px; }

.scrollbar { width: 24px; display: flex; flex-direction: column; align-items: center; padding: 10px 0 7px; background: #efefef; }
.thumb { width: 24px; height: 112px; margin: 412px 0 auto; background: #cdcdcd; }

/* ---------- taskbar ---------- */
.taskbar {
  position: relative;
  display: flex; height: 56px; overflow: hidden;
  border-top: 1px solid #5c7f80;
  background: linear-gradient(90deg, #7e9fa0 0 381px, #90b1b3 381px 914px, #456361 914px);
}
.ghost { position: absolute; color: #527576; }
.ghost-tree { left: 471px; top: -2px; font-size: 17.800px; }
.ghost-tree div { display: flex; align-items: center; gap: 7px; height: 25px; margin-top: -5px; }
.ghost-tree span { letter-spacing: .05px; }
.ghost-tree .nested { gap: 9px; height: 33px; margin: 5px 0 0 19px; }
.ghost-tree .nested span { letter-spacing: -.25px; }
.ghost-editor { left: 991px; top: 1px; font: 17.780px/24.200px "DejaVu Sans Mono", monospace; color: #8aaba8; }
.ghost-editor span { outline: 1px solid #85a7a4; outline-offset: 0; border-radius: 3px; }

.apps { position: relative; display: flex; margin-left: 1px; }
.apps div { width: 69.100px; height: 55px; display: flex; align-items: center; justify-content: center; }
.apps .on { border: 1px solid rgba(225, 240, 240, .75); outline: 1px solid #4d6869; background: rgba(225, 235, 235, .5); width: 65px; margin: 1px 2px; height: 53px; }
.apps .dim { outline: 0; border-color: rgba(215, 232, 232, .5); background: rgba(225, 235, 235, .28); }
.apps .drop { margin-top: 4px; }
.f-logo { font: 700 15px "Open Sans", sans-serif; fill: #fff; text-anchor: middle; }

.tray { position: relative; display: flex; margin-left: 3px; }
.tray div { width: 36.050px; height: 55px; display: flex; align-items: center; justify-content: center; padding-top: 2px; }

.clock { position: absolute; right: 24px; top: 4px; display: flex; flex-direction: column; align-items: center; font-size: 17px; line-height: 26px; letter-spacing: .28px; color: #fff; }
```
